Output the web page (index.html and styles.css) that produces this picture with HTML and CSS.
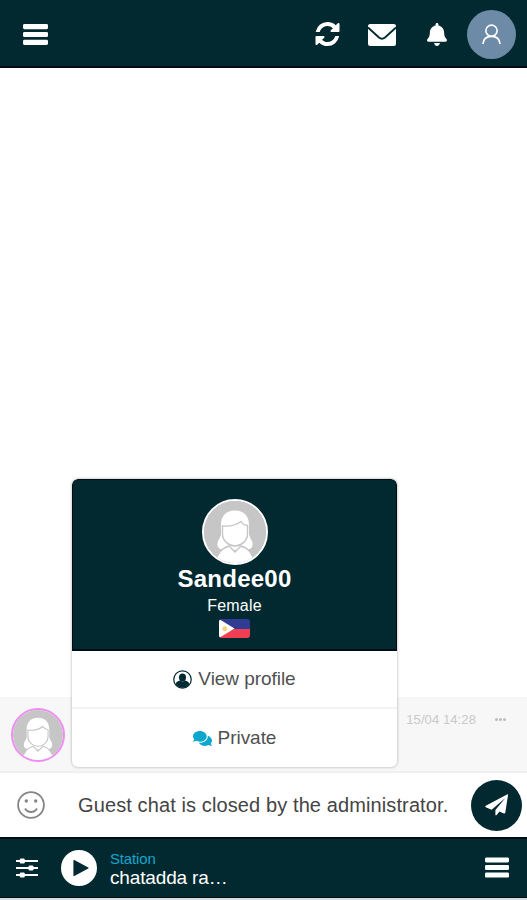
FILE: index.html
```html
<!DOCTYPE html>
<html lang="en">
<head>
<meta charset="utf-8">
<title>Chat</title>
<link rel="stylesheet" href="styles.css">
</head>
<body>
<svg class="defs" width="0" height="0" aria-hidden="true">
  <clipPath id="round"><circle cx="31" cy="31" r="31"/></clipPath>
  <symbol id="bars" viewBox="0 0 25 21">
    <rect width="25" height="5.2" rx="1.4"/><rect y="7.9" width="25" height="5.2" rx="1.4"/><rect y="15.8" width="25" height="5.2" rx="1.4"/>
  </symbol>
  <symbol id="woman" viewBox="0 0 62 62">
    <circle cx="31" cy="31" r="31" fill="#c6c6c6"/>
    <g fill="#fff" clip-path="url(#round)">
      <path d="M31 9.500C21 9.500 17 16 17 24V34Q16 37 14 40C12 46 15 49 22 49H40C47 49 50 46 48 40Q46 37 45 34V24C45 16 41 9.500 31 9.500Z"/>
      <path stroke="#c6c6c6" stroke-width="1.400" d="M11.500 64C12 52 18 47 25 45L31 51L37 45C44 47 50 52 50.500 64Z"/>
      <path stroke="#c6c6c6" stroke-width="1.400" d="M18.500 25Q30 26 37 20.500Q39 24 43.500 24.500V33C43.500 40 37 45 31 45S18.500 40 18.500 33Z"/>
    </g>
  </symbol>
</svg>
<div class="app">
  <header class="topbar">
    <svg class="menu-icon"><use href="#bars"/></svg>
    <div class="top-actions">
      <svg class="refresh" viewBox="0 0 1536 1536"><path d="M1511 928q0 5-1 7-64 268-268 434.500t-478 166.500q-146 0-282.500-55t-243.500-157l-129 129q-19 19-45 19t-45-19-19-45v-448q0-26 19-45t45-19h448q26 0 45 19t19 45-19 45l-137 137q71 66 161 102t187 36q134 0 250-65t186-179q11-17 53-117 8-23 30-23h192q13 0 22.500 9.500t9.500 22.500zm25-800v448q0 26-19 45t-45 19h-448q-26 0-45-19t-19-45 19-45l138-138q-148-137-349-137-134 0-250 65t-186 179q-11 17-53 117-8 23-30 23h-199q-13 0-22.500-9.500t-9.500-22.500v-7q65-268 270-434.500t480-166.500q146 0 284 55.500t245 156.500l130-129q19-19 45-19t45 19 19 45z"/></svg>
      <svg class="mail" viewBox="0 0 28 22"><rect width="28" height="22" rx="2.200"/><path class="flap" d="M0 3.500L11 13.500Q14 16 17 13.500L28 3.500"/></svg>
      <svg class="bell" viewBox="0 0 448 512"><path d="M224 512c35.320 0 63.970-28.650 63.970-64H160.030c0 35.350 28.650 64 63.970 64zm215.390-149.710c-19.320-20.760-55.470-51.990-55.470-154.290 0-77.700-54.480-139.900-127.940-155.160V32c0-17.670-14.320-32-31.980-32s-31.980 14.330-31.980 32v20.840C118.560 68.100 64.080 130.300 64.080 208c0 102.300-36.150 133.530-55.470 154.290-6 6.450-8.660 14.160-8.610 21.710.110 16.400 12.980 32 32.100 32h383.800c19.120 0 32-15.600 32.100-32 .050-7.550-2.610-15.270-8.610-21.710z"/></svg>
      <div class="me"><svg viewBox="0 0 20 22"><circle cx="10" cy="7" r="5.900"/><path d="M1 21C1.500 15.500 5 13 10 13S18.500 15.500 19 21"/></svg></div>
    </div>
  </header>

  <main class="room">
    <article class="message">
      <svg class="avatar"><use href="#woman"/></svg>
      <time>15/04 14:28</time>
      <span class="more"><i></i><i></i><i></i></span>
    </article>
    <section class="card">
      <div class="card-head">
        <svg class="avatar-large"><use href="#woman"/></svg>
        <h1>Sandee00</h1>
        <p>Female</p>
        <svg class="flag" viewBox="0 0 31 19"><path fill="#303b94" d="M0 0H31V10H0Z"/><path fill="#ef3f50" d="M0 10H31V19H0Z"/><path fill="#fff" d="M0 0L15.500 9.500L0 19Z"/><circle cx="5.800" cy="9.800" r="2.500" fill="#f1d778"/></svg>
      </div>
      <div class="option">
        <svg class="profile-icon" viewBox="0 0 20 20"><circle cx="10" cy="10" r="9.200" fill="none" stroke="#032a32" stroke-width="1.300"/><ellipse cx="10" cy="7.800" rx="3.700" ry="4.200"/><path d="M2.600 14.500Q3.500 12 7.600 11Q10 13 12.400 11Q16.500 12 17.400 14.500Q15 18.800 10 18.800T2.600 14.500Z"/></svg>
        <span>View profile</span>
      </div>
      <div class="option last">
        <svg class="chat-icon" viewBox="0 32 576 448"><path d="M416 192c0-88.400-93.100-160-208-160S0 103.600 0 192c0 34.300 14.100 65.900 38 92-13.400 30.200-35.500 54.200-35.800 54.500-2.200 2.300-2.800 5.700-1.500 8.700S4.800 352 8 352c36.600 0 66.900-12.300 88.700-25 32.200 15.700 70.300 25 111.300 25 114.900 0 208-71.600 208-160z"/><path d="M538 412c23.900-26 38-57.700 38-92 0-66.900-53.500-124.200-129.300-148.100.9 6.600 1.300 13.300 1.300 20.100 0 105.900-107.700 192-240 192-10.800 0-21.300-.8-31.700-1.900C207.800 439.600 281.800 480 368 480c41 0 79.100-9.200 111.300-25 21.800 12.700 52.100 25 88.700 25 3.200 0 6.100-1.900 7.300-4.800 1.300-2.900.7-6.300-1.500-8.700-.3-.3-22.400-24.200-35.800-54.500z"/></svg>
        <span class="private-label">Private</span>
      </div>
    </section>
  </main>

  <div class="composer">
    <svg class="smile" viewBox="0 0 28 28"><circle cx="14" cy="14" r="12.900"/><path d="M8 17.500Q10 21 14 21T20 17.500"/><circle class="eye" cx="9.300" cy="10" r="1.700"/><circle class="eye" cx="18.700" cy="10" r="1.700"/></svg>
    <span class="notice">Guest chat is closed by the administrator.</span>
    <div class="send"><svg viewBox="0 0 23 22"><path d="M22 .4Q23.200 0 23 1.300L20.300 18.600Q20 19.800 18.900 19.400L14.500 17.600L11.600 21.100Q10.500 22 10.400 20.500V16.100L20.300 4L7.500 15L6.500 15.700L.8 13.300Q-.5 12.500.8 11.700Z"/></svg></div>
  </div>

  <footer class="player">
    <svg class="sliders" viewBox="0 0 22 20"><path d="M0 3H22M0 10H22M0 17H22" stroke="#fff" stroke-width="1.800"/><rect x="3.800" y=".500" width="5" height="5" rx="1.200"/><rect x="12.500" y="7.500" width="5" height="5" rx="1.200"/><rect x="3.800" y="14.500" width="5" height="5" rx="1.200"/></svg>
    <svg class="play" viewBox="0 0 36 36"><circle cx="18" cy="18" r="18"/><path fill="#032a32" stroke="#032a32" stroke-width="1.200" stroke-linejoin="round" d="M13 10.500L27 18L13 25.500Z"/></svg>
    <div class="track"><span class="station">Station</span><span class="title">chatadda ra…</span></div>
    <svg class="player-menu"><use href="#bars"/></svg>
  </footer>
</div>
</body>
</html>
```
FILE: styles.css
```css
* { box-sizing: border-box; }
body { margin: 0; background: #fff; font-family: "Liberation Sans", Arial, sans-serif; }
svg { display: block; flex: none; fill: #fff; overflow: visible; }
.defs { position: absolute; }
.app { width: 527px; height: 900px; display: flex; flex-direction: column; border-bottom: 2px solid #d9dde0; }

.topbar { height: 68px; flex: none; display: flex; align-items: center; justify-content: space-between; padding: 0 11px 0 23px; background: #022930; border-bottom: 2px solid #000c12; }
.menu-icon { width: 25px; height: 21px; margin-top: 2px; }
.top-actions { display: flex; align-items: center; }
.refresh { width: 25px; height: 24px; margin: 2px 28px 0 0; }
.mail { width: 28px; height: 22px; margin: 3px 31px 0 0; }
.flap { fill: none; stroke: #022930; stroke-width: 1.8; }
.bell { width: 20px; height: 23px; margin: 3px 20px 0 0; }
.me { width: 49px; height: 49px; margin-top: 2px; border-radius: 50%; background: #6d8ba7; display: flex; align-items: center; justify-content: center; }
.me svg { width: 19px; height: 21px; fill: none; stroke: #fff; stroke-width: 1.7; }

.room { flex: 1; position: relative; display: flex; flex-direction: column; justify-content: flex-end; border-bottom: 2px solid #f0f0f0; }
.message { height: 74px; background: #f7f7f7; display: flex; align-items: flex-start; padding: 11px 21px 0 11px; color: #c9c9c9; }
.avatar { width: 54px; height: 54px; border: 2.5px solid #f08cf4; border-radius: 50%; }
.message time { margin: 4px 0 0 auto; font-size: 13px; line-height: 16px; letter-spacing: .1px; }
.more { display: flex; gap: 1px; margin: 10px 0 0 19px; }
.more i { width: 3px; height: 3px; border-radius: 50%; background: #bcbcbc; }

.card { position: absolute; left: 72px; top: 411px; width: 325px; height: 288px; border-radius: 6px; overflow: hidden; background: #fff; box-shadow: 0 0 3px rgba(0, 0, 0, .35); }
.card-head { height: 172px; background: #022930; border: 1px solid #000e14; border-bottom-width: 2px; border-radius: 6px 6px 0 0; color: #fff; display: flex; flex-direction: column; align-items: center; padding-top: 19px; }
.avatar-large { width: 66px; height: 66px; border: 2.5px solid #fff; border-radius: 50%; background: #c6c6c6; }
.card h1 { margin: 0; font-size: 24px; line-height: 28px; letter-spacing: .25px; }
.card p { margin: 3px 0 0; font-size: 16px; line-height: 20px; letter-spacing: .2px; }
.flag { width: 31px; height: 19px; margin-top: 3px; border-radius: 3px; overflow: hidden; }
.option { height: 58px; display: flex; align-items: center; justify-content: center; gap: 6px; border-bottom: 2px solid #f3f3f3; color: #505050; font-size: 19px; letter-spacing: -.05px; }
.last { border: 0; }
.profile-icon { width: 19px; height: 19px; fill: #032a32; }
.chat-icon { width: 19px; height: 15px; fill: #0ba7cf; }

.composer { height: 64px; flex: none; display: flex; align-items: center; padding: 0 5px 0 17px; }
.smile { width: 28px; height: 28px; fill: none; stroke: #858585; stroke-width: 1.8; }
.smile .eye { fill: #858585; stroke: none; }
.notice { margin-left: 33px; font-size: 20px; letter-spacing: .11px; color: #444; white-space: nowrap; }
.send { width: 51px; height: 51px; margin-left: auto; border-radius: 50%; background: #022930; display: flex; align-items: center; justify-content: center; }
.send svg { width: 23px; height: 22px; }

.player { height: 61px; flex: none; display: flex; align-items: center; padding: 0 18px 0 16px; background: #022930; border-top: 2px solid #000e14; border-bottom: 1px solid #000e14; }
.sliders { width: 22px; height: 20px; }
.play { width: 36px; height: 36px; margin-left: 23px; }
.track { margin: 2px 0 0 13px; display: flex; flex-direction: column; }
.station { color: #15a5ce; font-size: 15px; line-height: 18px; letter-spacing: -.15px; }
.title { color: #fff; font-size: 19px; line-height: 20px; letter-spacing: -.15px; }
.player-menu { width: 24px; height: 21px; margin: -2px 0 0 auto; }
```
